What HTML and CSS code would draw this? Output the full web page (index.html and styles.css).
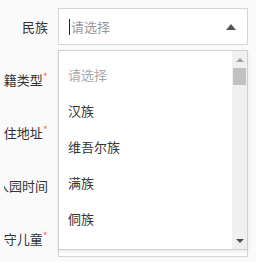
FILE: index.html
```html
<!DOCTYPE html>
<html lang="zh">
<head>
    <meta charset="UTF-8">
    <meta name="viewport" content="width=device-width, initial-scale=1.0">
    <title>民族</title>
    <link rel="stylesheet" href="styles.css">
</head>
<body>

    <div class="form">
        <div class="row">
            <div class="label">民族</div>
            <div class="field">
                <div class="select">
                    <span class="caret"></span>
                    <span class="placeholder">请选择</span>
                    <span class="arrow-up"></span>
                </div>

                <!-- rozwinięta lista -->
                <div class="dropdown">
                    <ul class="options">
                        <li class="muted">请选择</li>
                        <li>汉族</li>
                        <li>维吾尔族</li>
                        <li>满族</li>
                        <li>侗族</li>
                    </ul>
                    <div class="scrollbar">
                        <div class="sb-btn"><span class="sb-up"></span></div>
                        <div class="sb-thumb"></div>
                        <div class="sb-track"></div>
                        <div class="sb-btn"><span class="sb-down"></span></div>
                    </div>
                </div>
            </div>
        </div>

        <div class="row">
            <div class="label">户籍类型<span class="req">*</span></div>
            <div class="field"><div class="select"></div></div>
        </div>

        <div class="row">
            <div class="label">居住地址<span class="req">*</span></div>
            <div class="field"><div class="select"></div></div>
        </div>

        <div class="row">
            <div class="label">入园时间</div>
            <div class="field"><div class="select"></div></div>
        </div>

        <div class="row">
            <div class="label">留守儿童<span class="req">*</span></div>
            <div class="field"><div class="select"></div></div>
        </div>
    </div>

</body>
</html>
```

FILE: styles.css
```css
/* Podstawowy styl strony */
body {
    font-family: "Noto Sans CJK SC", "Noto Sans", sans-serif;
    font-size: 13px;
    color: #333;
    margin: 0;
    background-color: #fafafa;
    overflow: hidden;
}

.form {
    padding-top: 8px;
}

.row {
    display: flex;
    align-items: center;
    height: 37px;
    margin-bottom: 16px;
}

/* etykieta wyrównana do prawej, ucięta z lewej */
.label {
    flex: none;
    width: 44px;
    margin-left: 4px;
    margin-right: 10px;
    display: flex;
    justify-content: flex-end;
    white-space: nowrap;
    overflow: hidden;
}

.req {
    color: #f08080;
    font-size: 11px;
    margin-top: -2px;
}

.field {
    position: relative;
    width: 190px;
    height: 100%;
}

.select {
    box-sizing: border-box;
    height: 100%;
    border: 1px solid #d6d6d6;
    background-color: white;
    display: flex;
    align-items: center;
    padding-left: 10px;
    padding-right: 11px;
}

.caret {
    width: 1px;
    height: 16px;
    background-color: #222;
    margin-right: 1px;
}

.placeholder {
    color: #999;
    flex: 1;
}

.arrow-up {
    width: 0;
    height: 0;
    border-left: 5px solid transparent;
    border-right: 5px solid transparent;
    border-bottom: 6px solid #555;
}

/* lista rozwijana */
.dropdown {
    position: absolute;
    top: calc(100% + 5px);
    left: 0;
    width: 190px;
    height: 200px;
    box-sizing: border-box;
    border: 1px solid #cfcfcf;
    background-color: white;
    box-shadow: 0 2px 4px rgba(0, 0, 0, 0.08);
    display: flex;
    overflow: hidden;
    z-index: 2;
}

.options {
    flex: 1;
    list-style: none;
    margin: 0;
    padding: 6px 0 0 9px;
}

.options li {
    height: 36px;
    line-height: 36px;
}

.options .muted {
    color: #aaa;
}

.scrollbar {
    flex: none;
    width: 15px;
    background-color: #f0f0f0;
    display: flex;
    flex-direction: column;
}

.sb-btn {
    height: 17px;
    display: flex;
    align-items: center;
    justify-content: center;
}

.sb-thumb {
    height: 17px;
    margin: 0 1px;
    background-color: #c1c1c1;
}

.sb-track {
    flex: 1;
}

.sb-up {
    border-left: 4px solid transparent;
    border-right: 4px solid transparent;
    border-bottom: 4px solid #a3a3a3;
}

.sb-down {
    border-left: 4px solid transparent;
    border-right: 4px solid transparent;
    border-top: 4px solid #505050;
}
```
